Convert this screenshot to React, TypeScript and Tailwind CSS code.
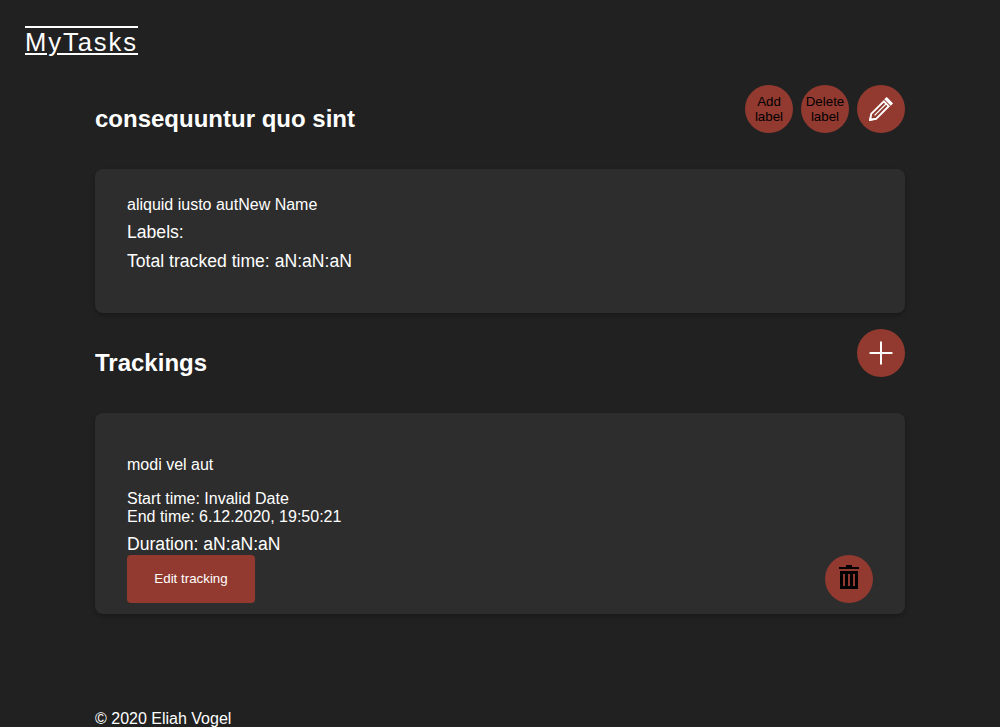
import type { ReactNode } from "react";

function RoundButton({ label, children }: { label: string; children: ReactNode }) {
  return (
    <button
      aria-label={label}
      className="flex size-12 shrink-0 items-center justify-center rounded-full bg-[#923a30] text-center text-[13.333px] leading-[15px] text-black"
    >
      {children}
    </button>
  );
}

function PencilIcon() {
  return (
    <svg width="24" height="24" viewBox="0 0 24 24" fill="none" stroke="#fff">
      <path d="M1.2 22.8 L2.2 16.9 L14.8 4.3 L19.7 9.2 L7.1 21.8 Z" strokeWidth="1.9" />
      <path d="M5.6 18.4 L17 7" strokeWidth="1.3" />
      <path d="M0 24 L0.7 20 L4 23.3 Z" fill="#fff" stroke="none" />
      <path d="M15.3 2.2 L17.2 0.3 Q17.6 0 18 0.3 L23.7 6 Q24 6.4 23.7 6.8 L21.8 8.7 Z" fill="#fff" stroke="none" />
    </svg>
  );
}

function PlusIcon() {
  return (
    <svg width="24" height="24" viewBox="0 0 24 24" stroke="#fff" strokeWidth="2" strokeLinecap="round">
      <path d="M12 1.3V22.7M1.3 12H22.7" />
    </svg>
  );
}

function TrashIcon() {
  return (
    <svg className="mb-1" width="24" height="24" viewBox="0 0 24 24" fill="#000" fillRule="evenodd">
      <path d="M9 0h6v2h7v2H2V2h7z" />
      <path d="M3 6h18v18H3zM6 9v12h2V9zM11 9v12h2V9zM16 9v12h2V9z" />
    </svg>
  );
}

export default function App() {
  return (
    <div className="flex h-[727px] flex-col overflow-hidden bg-[#212121] font-['Liberation_Sans',Arial,sans-serif] text-base leading-[18px] text-white">
      <header className="h-[85px] shrink-0 pt-[29px] pl-[25px]">
        <a className="block w-fit text-[25.6px] leading-[27px] tracking-[1.92px] decoration-2 underline-offset-[2px] [text-decoration-line:underline_overline]">MyTasks</a>
      </header>
      <main className="mx-auto w-[810px]">
        <div className="flex h-[84px] justify-between">
          <h1 className="pt-5 text-2xl leading-[27px] font-bold">consequuntur quo sint</h1>
          <div className="flex gap-2">
            <RoundButton label="Add label">Add<br />label</RoundButton>
            <RoundButton label="Delete label">Delete<br />label</RoundButton>
            <RoundButton label="Edit task"><PencilIcon /></RoundButton>
          </div>
        </div>
        <section className="h-36 rounded-lg bg-[#2d2d2d] px-8 pt-[27px] shadow-[0_2px_4px_rgba(0,0,0,0.25)]">
          <p>aliquid iusto autNew Name</p>
          <p className="mt-2 text-[17.6px] leading-[21px]">Labels:</p>
          <p className="mt-2 text-[17.6px] leading-[21px]">Total tracked time: aN:aN:aN</p>
        </section>
        <div className="mt-4 flex h-[84px] justify-between">
          <h2 className="pt-5 text-2xl leading-[27px] font-bold">Trackings</h2>
          <RoundButton label="Add tracking"><PlusIcon /></RoundButton>
        </div>
        <section className="h-[201px] rounded-lg bg-[#2d2d2d] px-8 pt-[43px] shadow-[0_2px_4px_rgba(0,0,0,0.25)]">
          <p>modi vel aut</p>
          <p className="mt-4">Start time: Invalid Date</p>
          <p>End time: 6.12.2020, 19:50:21</p>
          <p className="mt-2 text-[17.6px] leading-[21px]">Duration: aN:aN:aN</p>
          <div className="flex items-center justify-between">
            <button className="h-12 w-32 rounded bg-[#923a30] text-[13.333px] text-white">Edit tracking</button>
            <RoundButton label="Delete tracking"><TrashIcon /></RoundButton>
          </div>
        </section>
        <footer className="mt-24">© 2020 Eliah Vogel</footer>
      </main>
    </div>
  );
}
